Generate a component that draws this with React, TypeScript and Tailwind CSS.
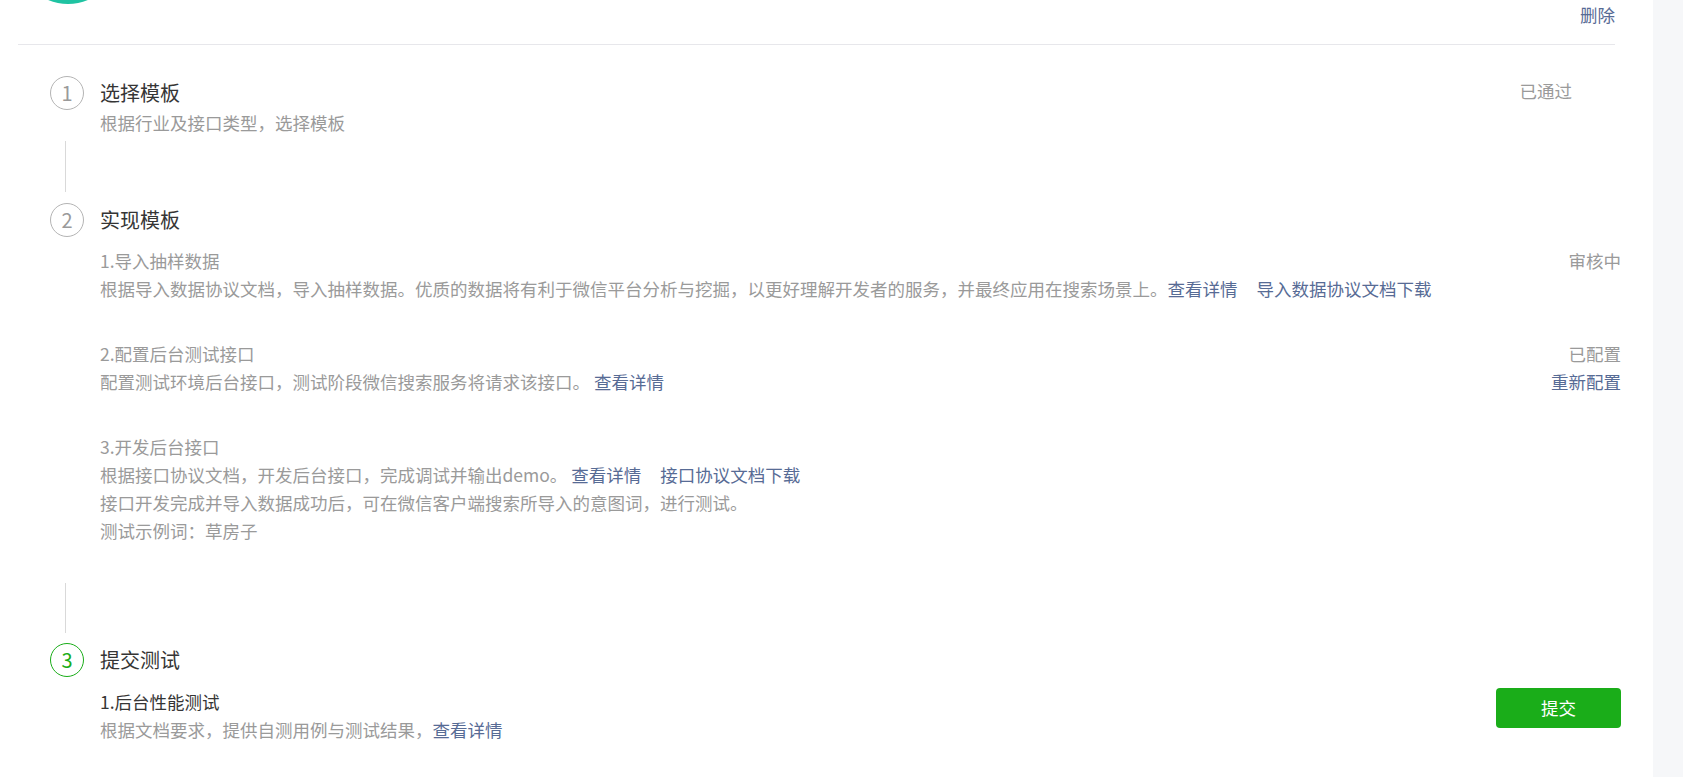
import React from "react";

function Circle({ n, active }: { n: number; active?: boolean }) {
  return (
    <div
      className={
        active
          ? "w-[34px] h-[34px] shrink-0 rounded-full border border-[#1aad19] text-[#1aad19] flex items-center justify-center text-[20px] leading-none"
          : "w-[34px] h-[34px] shrink-0 rounded-full border border-[#b4b4b4] text-[#9a9a9a] flex items-center justify-center text-[20px] leading-none"
      }
    >
      {n}
    </div>
  );
}

function Link({ children, className }: { children: React.ReactNode; className?: string }) {
  return <a className={"text-[#576b95] cursor-pointer " + (className ?? "")}>{children}</a>;
}

export default function App() {
  return (
    <div className="flex w-full h-[777px] overflow-hidden bg-[#f6f7f9] font-['Noto_Sans_CJK_SC','Microsoft_YaHei',sans-serif] text-[17.5px]">
      <div className="w-[1653px] shrink-0 bg-white">
        {/* header */}
        <div className="ml-[18px] w-[1597px] h-[45px] border-b border-[#e7e7eb] flex items-start">
          <div className="w-[104px] h-[104px] shrink-0 rounded-full bg-[#1fc3a2] mt-[-100px] ml-[-2px]" />
          <Link className="ml-auto mt-px leading-[28px]">删除</Link>
        </div>

        <div className="w-[1621px] pl-[50px]">
          {/* step 1 */}
          <div className="pt-[31px]">
            <div className="flex items-center h-[34px]">
              <Circle n={1} />
              <div className="ml-[16px] text-[20px] text-[#353535]">选择模板</div>
              <div className="ml-auto mr-[49px] mb-[4px] text-[#9a9a9a]">已通过</div>
            </div>
            <div className="pl-[50px] leading-[26px] text-[#9a9a9a]">根据行业及接口类型，选择模板</div>
          </div>
          <div className="ml-[15px] w-px h-[51px] bg-[#d9d9d9] mt-[5px] mb-[11px]" />

          {/* step 2 */}
          <div>
            <div className="flex items-center h-[34px]">
              <Circle n={2} />
              <div className="ml-[16px] text-[20px] text-[#353535]">实现模板</div>
            </div>
            <div className="pl-[50px] mt-[10px] leading-[28px] text-[#9a9a9a] flex flex-col gap-[37px]">
              <div className="flex justify-between">
                <div>
                  <div>1.导入抽样数据</div>
                  <div>
                    根据导入数据协议文档，导入抽样数据。优质的数据将有利于微信平台分析与挖掘，以更好理解开发者的服务，并最终应用在搜索场景上。
                    <Link>查看详情</Link>
                    <Link className="ml-[19px]">导入数据协议文档下载</Link>
                  </div>
                </div>
                <div className="text-right">审核中</div>
              </div>
              <div className="flex justify-between">
                <div>
                  <div>2.配置后台测试接口</div>
                  <div>
                    配置测试环境后台接口，测试阶段微信搜索服务将请求该接口。 <Link>查看详情</Link>
                  </div>
                </div>
                <div className="text-right flex flex-col">
                  <span>已配置</span>
                  <Link>重新配置</Link>
                </div>
              </div>
              <div>
                <div>3.开发后台接口</div>
                <div>
                  根据接口协议文档，开发后台接口，完成调试并输出demo。 <Link>查看详情</Link>
                  <Link className="ml-[19px]">接口协议文档下载</Link>
                </div>
                <div>接口开发完成并导入数据成功后，可在微信客户端搜索所导入的意图词，进行测试。</div>
                <div>测试示例词：草房子</div>
              </div>
            </div>
          </div>
          <div className="ml-[15px] w-px h-[50px] bg-[#d9d9d9] mt-[38px] mb-[10px]" />

          {/* step 3 */}
          <div>
            <div className="flex items-center h-[34px]">
              <Circle n={3} active />
              <div className="ml-[16px] text-[20px] text-[#353535]">提交测试</div>
            </div>
            <div className="pl-[50px] mt-[11px] leading-[28px] flex justify-between items-start">
              <div>
                <div className="text-[#353535]">1.后台性能测试</div>
                <div className="text-[#9a9a9a]">
                  根据文档要求，提供自测用例与测试结果，<Link>查看详情</Link>
                </div>
              </div>
              <button className="w-[125px] h-[40px] rounded-[4px] bg-[#1aad19] text-white text-[17.5px] flex items-center justify-center">
                提交
              </button>
            </div>
          </div>
        </div>
      </div>
    </div>
  );
}
